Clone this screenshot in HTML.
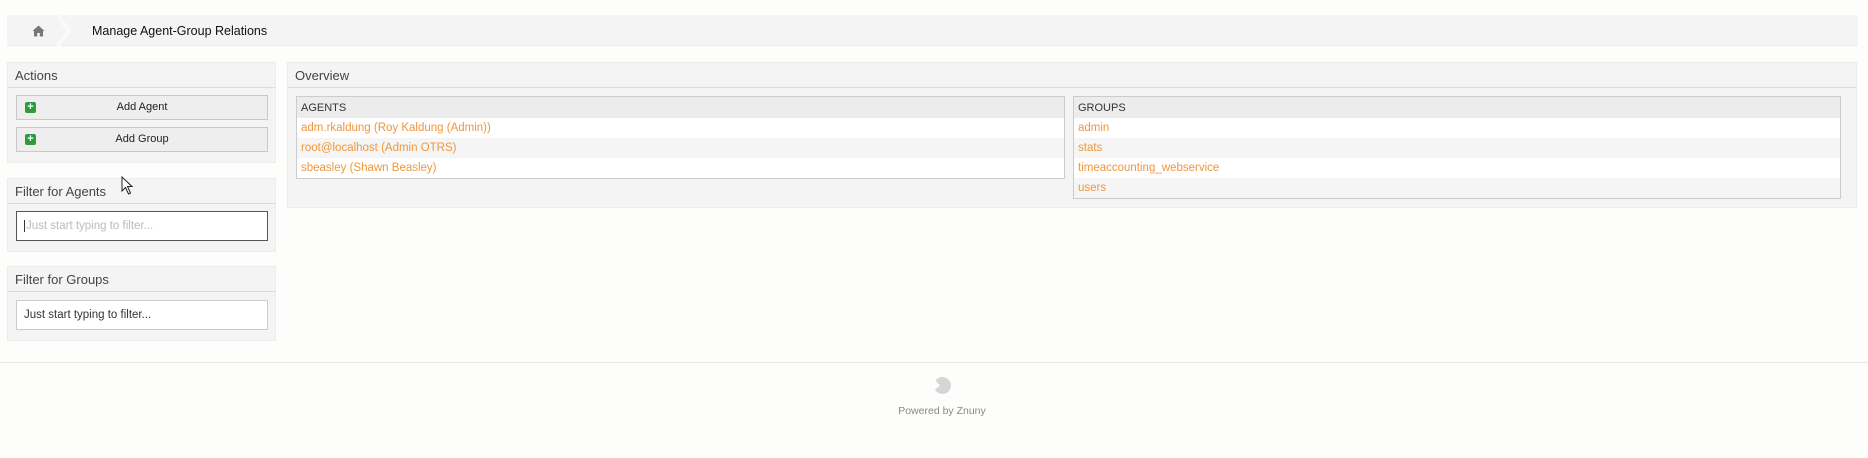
<!DOCTYPE html>
<html><head><meta charset="utf-8"><style>
*{box-sizing:border-box;margin:0;padding:0}
body{width:1868px;height:458px;background:#fdfdfc;font-family:"Liberation Sans",Arial,sans-serif;position:relative;overflow:hidden;color:#222}
.abs{position:absolute}
.bc{left:7px;top:15px;width:1851px;height:31px;background:#f4f4f4;border-bottom:1px solid #ececec}
.box{background:#f4f4f4;border:1px solid #ececec}
.hd{position:absolute;left:0;right:0;top:0;height:25px;border-bottom:1px solid #ddd;font-size:13px;color:#444;padding:5px 0 0 7px}
.btn{position:absolute;left:8px;width:252px;height:25px;border:1px solid #c8c8c8;background:#eee;font-size:11px;text-align:center;line-height:23px;color:#222}
.plus{position:absolute;left:8px;top:6px;width:11px;height:11px;background:#2e9c3e;border-radius:2px;color:#fff;font-size:11px;line-height:10px;font-weight:bold;text-align:center}
.inp{position:absolute;left:8px;width:252px;height:30px;background:#fff;font-size:11.5px;padding:8px 0 0 7px}
.tbl{border:1px solid #ccc;background:#f4f4f4}
.th{height:21px;background:#ececec;font-size:11px;color:#333;padding:5px 0 0 4px}
.r{height:20px;font-size:11.5px;color:#f0963c;padding:4px 0 0 4px;background:#fff}
.r.a{background:#f5f5f5}
</style></head><body>
<div class="abs bc">
 <svg class="abs" style="left:25px;top:10px" width="13" height="12" viewBox="0 0 13 12"><path d="M6.5 0.5L0.5 6H2V11.5H5.2V8H7.8V11.5H11V6H12.5Z" fill="#777"/></svg>
 <svg class="abs" style="left:50px;top:0" width="20" height="31"><path d="M0 0L12 15.5L0 31" fill="none" stroke="#fafafa" stroke-width="4"/></svg>
 <div class="abs" style="left:85px;top:9px;font-size:12.5px;color:#111">Manage Agent-Group Relations</div>
</div>

<div class="abs box" style="left:7px;top:62px;width:269px;height:101px">
 <div class="hd">Actions</div>
 <div class="btn" style="top:32px"><span class="plus">+</span>Add Agent</div>
 <div class="btn" style="top:64px"><span class="plus">+</span>Add Group</div>
</div>
<div class="abs box" style="left:7px;top:178px;width:269px;height:74px">
 <div class="hd">Filter for Agents</div>
 <div class="inp" style="top:32px;border:1px solid #555;color:#bbb"><span style="border-left:1px solid #333;padding-left:1px">Just start typing to filter...</span></div>
</div>
<div class="abs box" style="left:7px;top:266px;width:269px;height:75px">
 <div class="hd">Filter for Groups</div>
 <div class="inp" style="top:33px;border:1px solid #ccc;color:#333">Just start typing to filter...</div>
</div>
<svg class="abs" style="left:121px;top:176px" width="14" height="20" viewBox="0 0 14 20"><path d="M1 1V15L4.5 11.5L7.5 18L9.5 17L6.5 10.5H11Z" fill="#fff" stroke="#222" stroke-width="1"/></svg>

<div class="abs box" style="left:287px;top:62px;width:1570px;height:146px">
 <div class="hd">Overview</div>
 <div class="abs tbl" style="left:8px;top:33px;width:769px;height:83px">
  <div class="th">AGENTS</div>
  <div class="r">adm.rkaldung (Roy Kaldung (Admin))</div>
  <div class="r a">root@localhost (Admin OTRS)</div>
  <div class="r">sbeasley (Shawn Beasley)</div>
 </div>
 <div class="abs tbl" style="left:785px;top:33px;width:768px;height:103px">
  <div class="th">GROUPS</div>
  <div class="r">admin</div>
  <div class="r a">stats</div>
  <div class="r">timeaccounting_webservice</div>
  <div class="r a">users</div>
 </div>
</div>

<div class="abs" style="left:0;top:362px;width:1868px;border-top:1px solid #e8e8e8"></div>
<svg class="abs" style="left:933px;top:376px" width="19" height="19" viewBox="0 0 19 19"><path d="M9.5 1A8.5 8.5 0 1 1 2 13.5L7 9.5L2.5 4.5A8.5 8.5 0 0 1 9.5 1Z" fill="#d6d6d6"/></svg>
<div class="abs" style="left:0;width:1884px;top:405px;text-align:center;font-size:10.5px;color:#888">Powered by Znuny</div>
</body></html>
